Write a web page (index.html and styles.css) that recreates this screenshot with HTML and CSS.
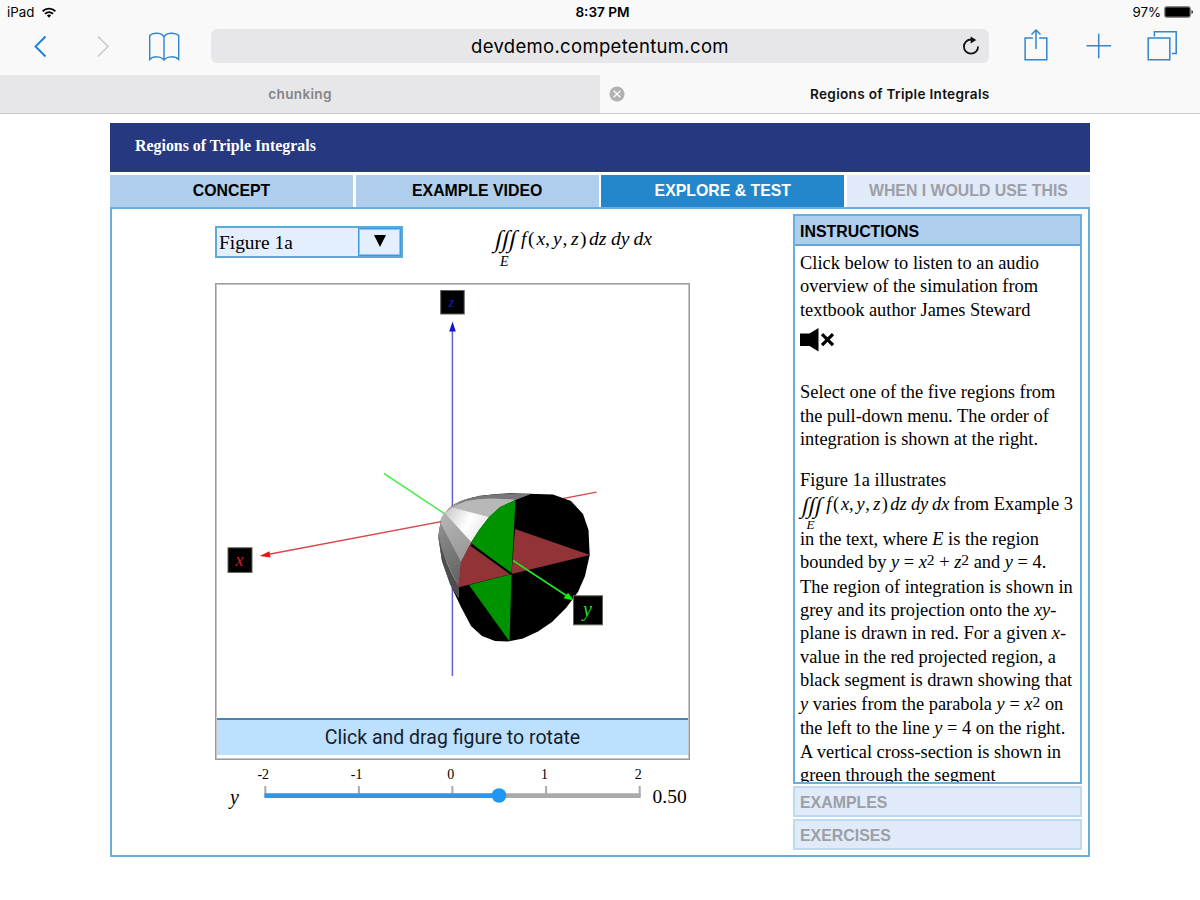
FILE: index.html
```html
<!DOCTYPE html>
<html lang="en">
<head>
<meta charset="utf-8">
<title>Regions of Triple Integrals</title>
<link rel="stylesheet" href="styles.css">
</head>
<body>
<header class="browser">
  <div class="status">
    <div class="status-left"><span class="device">iPad</span>
      <svg class="wifi" width="14" height="11" viewBox="0 0 14 11" fill="none" stroke="#000"><path d="M.6 4.2a9.3 9.3 0 0 1 12.8 0" stroke-width="1.9"/><path d="M3 6.8a5.9 5.9 0 0 1 8 0" stroke-width="1.8"/><path d="M4.9 8.5a3.2 3.2 0 0 1 4.2 0L7 10.7z" fill="#000" stroke="none"/></svg>
    </div>
    <div class="clock">8:37 PM</div>
    <div class="status-right"><span class="percent">97%</span>
      <svg width="30" height="12" viewBox="0 0 30 12"><rect x=".5" y=".5" width="26" height="11" rx="2" fill="none" stroke="#888"/><rect x="1.2" y="1.2" width="24.600" height="9.600" rx="1" fill="#000"/><path d="M27.5 4q1.5.4 1.5 2t-1.5 2z" fill="#222"/></svg>
    </div>
  </div>
  <div class="toolbar">
    <svg class="nav-icons" width="200" height="40" viewBox="0 0 200 40" fill="none"><path d="M45.5 11.500 35.500 21.500 45.500 31.500" stroke="#1d7fdc" stroke-width="1.9"/><path d="M98 11.500 108 21.500 98 31.500" stroke="#c9c9cd" stroke-width="1.6"/><path d="M164 35V12C162 7.500 153 7 149.700 10.500V34.500C153 31 161 30.700 164 35C167 30.700 175 31 178.700 34.500V10.500C175 7 166 7.500 164 12" stroke="#3185cc" stroke-width="1.4"/></svg>
    <div class="address"><span class="url">devdemo.competentum.com</span>
      <svg class="reload" width="20" height="20" viewBox="0 0 20 20" fill="none"><path d="M12.100 3.500H10A7.100 7.100 0 1 0 17.100 10.600" stroke="#111" stroke-width="1.8"/><path d="M9.700.600 15.300 4 9.700 7.400z" fill="#111"/></svg>
    </div>
    <svg class="actions" width="190" height="40" viewBox="0 0 190 40" fill="none" stroke="#3185cc" stroke-width="1.500"><path d="M30.800 13.100H23.100V34.700H44.800V13.100H37.200M34 24V5M29.500 9.500 34 5 38.500 9.500M84.500 20.700H109M96.700 8.700V33.200M146.200 13.100H167.800V34.700H146.200zM152.400 11.500V6.700H174.200V28.500H170"/></svg>
  </div>
  <div class="page-tabs">
    <div class="page-tab"><span class="tab-inactive">chunking</span></div>
    <div class="page-tab current">
      <svg class="close" width="16" height="16" viewBox="0 0 16 16"><circle cx="8" cy="8" r="7.600" fill="#b2b2b2"/><path d="M4.700 4.700 11.300 11.300M11.300 4.700 4.700 11.300" stroke="#fafafa" stroke-width="1.400"/></svg>
      <span class="tab-title">Regions of Triple Integrals</span>
    </div>
  </div>
</header>

<main class="app">
  <h1 class="title">Regions of Triple Integrals</h1>
  <nav class="tabs">
    <div class="tab">CONCEPT</div>
    <div class="tab">EXAMPLE VIDEO</div>
    <div class="tab active">EXPLORE &amp; TEST</div>
    <div class="tab disabled">WHEN I WOULD USE THIS</div>
  </nav>
  <div class="content">
    <section class="simulation">
      <div class="controls">
        <div class="select"><span class="select-value">Figure 1a</span><span class="select-button"><svg width="12" height="12" viewBox="0 0 12 12"><path d="M0 0H12L6 12z"/></svg></span></div>
        <svg class="formula" width="160" height="44" viewBox="0 0 160 44">
          <g class="integral"><text transform="translate(1 21) skewX(-12)">∫</text><text transform="translate(8 21) skewX(-12)">∫</text><text transform="translate(15 21) skewX(-12)">∫</text></g>
          <text class="bound" x="7" y="40">E</text>
          <g class="math"><text x="28" y="18.500" class="it">f</text><text x="35" y="18.500">(</text><text x="43.500" y="18.500" class="it">x</text><text x="52" y="18.500">,</text><text x="60" y="18.500" class="it">y</text><text x="69.500" y="18.500">,</text><text x="78" y="18.500" class="it">z</text><text x="87" y="18.500">)</text><text x="96" y="18.500" class="it">dz</text><text x="118" y="18.500" class="it">dy</text><text x="140.500" y="18.500" class="it">dx</text></g>
        </svg>
      </div>
      <div class="viewport">
        <svg class="scene" width="471" height="433" viewBox="217 285 471 433">
          <defs>
            <linearGradient id="face" x1="0" y1="0" x2="1" y2=".4"><stop offset="0" stop-color="#c4c4c4"/><stop offset=".6" stop-color="#fff"/><stop offset="1" stop-color="#e8e8e8"/></linearGradient>
            <linearGradient id="side" x1="0" y1="0" x2=".4" y2="1"><stop offset="0" stop-color="#b5b5b5"/><stop offset="1" stop-color="#9b9b9b"/></linearGradient>
            <linearGradient id="shade" x1="0" y1="0" x2=".3" y2="1"><stop offset="0" stop-color="#8f8f8f"/><stop offset="1" stop-color="#686868"/></linearGradient>
          </defs>
          <path d="M452.400 676V330" stroke="#6262d2" stroke-width="1.500"/>
          <path d="M452.500 321.500 449.200 331.500H455.800z" fill="#1515d0"/>
          <path d="M384 473.500 448 516" stroke="#55ed55" stroke-width="1.600"/>
          <path d="M596.500 492.200 265 555" stroke="#d9474b" stroke-width="1.300"/>
          <path d="M259.700 556 269.500 551.300 270.500 557.500z" fill="#ed1212"/>
          <path d="M441 519Q448 505 465 499.500Q483 494 511 493.200L553 494.500 571 501 583 514 588.500 530 589.700 555 585 576 578 592 566 608 552 622 538 631.500 523 638.500 508 641.500 495 641 482 636 471 626 461 607 451 586 442 561 438.300 537z" fill="#000"/>
          <path d="M438.300 537 441 519Q448 505 465 499.500Q483 494 531 493.800L515 500 500 507 489 517 479 530 471 543 461 562 458.500 586V598L450 584 442 561z" fill="#a2a2a2"/>
          <path d="M455 505Q467 497 485 495.500Q500 493.300 531 493.800L515 500Q485 496.500 468 501z" fill="#777"/>
          <path d="M451 508 466 501Q488 497 515 500L500 507 489 517z" fill="#b8b8b8"/>
          <path d="M444.500 513 452 507.500 489 517 479 530 471 542z" fill="url(#face)"/>
          <path d="M441 519 444.500 513 471 542 461 562 440.500 524z" fill="url(#side)"/>
          <path d="M440.500 523 461 562 458.500 586Q444 560 438.300 535z" fill="url(#shade)"/>
          <path d="M438.300 535Q445 565 458.500 586V598L450 584 442 561z" fill="#4d4d4d"/>
          <path d="M515.500 500 511.500 574 471 543 479 530 489 517 500 507z" fill="#009300"/>
          <path d="M470.500 543.500 511 574 458 587.500 461 562z" fill="#923338"/>
          <path d="M469 585 511.500 574 509.500 641.500z" fill="#009300"/>
          <path d="M515 529 590 555 511.500 574z" fill="#923338"/>
          <path d="M471 545 511.500 574" stroke="#000" stroke-width="2"/>
          <path d="M513 560.500 567 596" stroke="#25e825" stroke-width="1.500"/>
          <path d="M574 600.500 563.500 598.300 568 592.800z" fill="#08f508"/>
          <g stroke="#5c6355"><rect x="440.700" y="290.500" width="23.500" height="23.500"/><rect x="228" y="547.800" width="24" height="24.600"/><rect x="573.500" y="595.800" width="29" height="29"/></g>
          <text class="axis axis-z" x="448.500" y="307">z</text><text class="axis axis-x" x="235.500" y="565.500">x</text><text class="axis axis-y" x="583" y="616">y</text>
        </svg>
        <div class="rotate"><span>Click and drag figure to rotate</span></div>
      </div>
      <svg class="slider" width="480" height="50" viewBox="220 762 480 50">
        <g class="tick-label"><text x="263.300" y="779">-2</text><text x="356.700" y="779">-1</text><text x="450.700" y="779">0</text><text x="544.500" y="779">1</text><text x="638.200" y="779">2</text></g>
        <path d="M265.300 786V797M358.900 786V795M452.400 786V795M546.100 786V795M639.700 786V797" stroke="#aaa" stroke-width="2"/>
        <path d="M499 795.700H640.600" stroke="#aaa" stroke-width="4.800"/><path d="M264.500 795.700H499" stroke="#2e95ea" stroke-width="4.800"/>
        <circle cx="499" cy="795.500" r="7.300" fill="#2196f3"/>
        <text class="variable" x="230" y="803.500">y</text><text class="reading" x="652.500" y="803">0.50</text>
      </svg>
    </section>
    <aside class="sidebar">
      <div class="panel">
        <h2 class="panel-title">INSTRUCTIONS</h2>
        <div class="panel-body">
          <p>Click below to listen to an audio<br>overview of the simulation from<br>textbook author James Steward</p>
          <svg class="audio" width="36" height="26" viewBox="0 0 36 26"><path d="M0 6.500H9.500L18.500 1V24.500L9.500 19H0z"/><path d="M22 7.200 33 18.200M33 7.200 22 18.200" stroke="#000" stroke-width="3.200"/></svg>
          <p class="select-note">Select one of the five regions from<br>the pull-down menu. The order of<br>integration is shown at the right.</p>
          <p class="figure-note">Figure 1a illustrates</p>
          <div class="formula-line">
            <svg class="formula" width="150.400" height="41.400" viewBox="0 0 160 44">
              <g class="integral"><text transform="translate(1 21) skewX(-12)">∫</text><text transform="translate(8 21) skewX(-12)">∫</text><text transform="translate(15 21) skewX(-12)">∫</text></g>
              <text class="bound" x="7" y="38.500">E</text>
              <g class="math"><text x="28" y="18.500" class="it">f</text><text x="35" y="18.500">(</text><text x="43.500" y="18.500" class="it">x</text><text x="52" y="18.500">,</text><text x="60" y="18.500" class="it">y</text><text x="69.500" y="18.500">,</text><text x="78" y="18.500" class="it">z</text><text x="87" y="18.500">)</text><text x="96" y="18.500" class="it">dz</text><text x="118" y="18.500" class="it">dy</text><text x="140.500" y="18.500" class="it">dx</text></g>
            </svg><span>from Example 3</span>
          </div>
          <p>in the text, where <i>E</i> is the region<br>bounded by <i>y</i> = <i>x</i><sup>2</sup> + <i>z</i><sup>2</sup> and <i>y</i> = 4.</p>
          <p class="region-note">The region of integration is shown in<br>grey and its projection onto the <i>xy</i>-<br>plane is drawn in red. For a given <i>x</i>-<br>value in the red projected region, a<br>black segment is drawn showing that<br><i>y</i> varies from the parabola <i>y</i> = <i>x</i><sup>2</sup> on</p>
          <p class="region-note">the left to the line <i>y</i> = 4 on the right.<br>A vertical cross-section is shown in<br>green through the segment</p>
        </div>
      </div>
      <div class="collapsed">EXAMPLES</div>
      <div class="collapsed">EXERCISES</div>
    </aside>
  </div>
</main>
</body>
</html>
```
FILE: styles.css
```css
* { box-sizing: border-box; }
body { margin: 0; width: 1200px; height: 900px; overflow: hidden; background: #fff; color: #000; font-family: "Liberation Serif", serif; }
svg { display: block; flex: none; }
p, h1, h2 { margin: 0; }
.browser { height: 114px; background: #f9f9fa; border-bottom: 1px solid #c9c9cd; font-family: Inter, sans-serif; }
.status { height: 25px; display: grid; grid-template-columns: 1fr auto 1fr; align-items: center; padding: 0 6px 1px 7px; font-size: 13.3px; }
.status-left { display: flex; align-items: center; gap: 8px; }
.status-right { display: flex; align-items: center; justify-content: flex-end; gap: 3px; }
.clock { font-weight: 600; font-size: 13.6px; padding-left: 4px; }
.toolbar { height: 50px; display: flex; }
.address { width: 778px; height: 34px; margin: 4px 0 0 11px; border-radius: 6px; background: #e7e7e9; display: flex; align-items: center; padding-left: 260px; font-size: 18.500px; letter-spacing: .32px; }
.url { width: 257px; white-space: nowrap; }
.reload { margin-left: 233px; }
.actions { margin-left: 13px; }
.page-tabs { height: 38px; display: grid; grid-template-columns: 1fr 1fr; font-size: 13.6px; font-weight: 600; letter-spacing: .3px; }
.page-tab { display: flex; align-items: center; justify-content: center; background: #e7e7e9; color: #85858a; }
.page-tab.current { justify-content: flex-start; background: #f9f9fa; color: #111; padding-left: 9px; gap: 185px; }
.app { width: 980px; margin: 9px 0 0 110px; }
.title { height: 49px; padding-left: 25px; background: #26387f; color: #fff; font-size: 15.9px; line-height: 46px; }
.tabs { display: grid; grid-template-columns: repeat(4, 1fr); gap: 2.500px; margin-top: 3px; height: 32px; font: bold 15.85px/32px "Liberation Sans", sans-serif; text-align: center; }
.tab { background: #afceed; }
.tab.active { background: #2487cc; color: #fff; }
.tab.disabled { background: #e0eaf8; color: #9c9fa7; }
.content { height: 650px; border: 2px solid #6aafdc; display: flex; justify-content: space-between; }
.simulation { padding-left: 103px; }
.controls { display: flex; padding-top: 17px; height: 74px; }
.select { display: flex; width: 188px; height: 32px; border: 2px solid #5fa9d9; background: #e4effd; font-size: 19.4px; line-height: 29px; padding-left: 2px; justify-content: space-between; }
.select-button { width: 43px; height: 28px; border: 1px solid #3c9ada; outline: 1px solid #8fc4e8; outline-offset: -2px; display: flex; align-items: center; justify-content: center; padding-bottom: 2px; }
.formula { margin: 0 0 0 90px; overflow: visible; font-family: "Liberation Serif", serif; }
.math { font-size: 19.6px; }
.integral { font-size: 24px; }
.it, .bound { font-style: italic; }
.bound { font-size: 14px; }
.viewport { width: 475px; height: 477px; border: 1px solid #999a9d; box-shadow: inset 0 0 0 1px #c5c5c8; padding: 1px; }
.rotate { height: 37px; background: #bde0ff; border-top: 2px solid #4a84b0; text-align: center; font: 19.5px/35px Roboto, sans-serif; color: #15202b; }
.axis { font: italic 18px "Liberation Serif", serif; }
.axis-z { font-size: 15px; fill: #1b1bbd; }
.axis-x { fill: #d51c24; }
.axis-y { font-size: 20px; fill: #20dd20; }
.slider { margin: 2px 0 0 5px; }
.tick-label { font-size: 14px; text-anchor: middle; }
.variable { font-size: 20px; font-style: italic; }
.reading { font-size: 19.500px; }
.sidebar { width: 295px; padding: 5px 6px 0 0; display: flex; flex-direction: column; gap: 2px; }
.panel { height: 570px; border: 2px solid #6aafdc; overflow: hidden; }
.panel-title, .collapsed { font: bold 15.9px/31px "Liberation Sans", sans-serif; padding-left: 5px; }
.panel-title { height: 30px; background: #afceed; border-bottom: 2px solid #5fa9d9; }
.panel-body { padding: 6px 0 0 5px; font-size: 18.400px; line-height: 23.400px; white-space: nowrap; }
.audio { margin: 5px 0 28px; }
.figure-note { margin-top: 18px; }
.formula-line { display: flex; height: 35px; }
.formula-line .formula { margin: 0 3px 0 0; }
.region-note { margin-top: 1px; }
sup { font-size: 15.500px; line-height: 0; vertical-align: 3px; }
.collapsed { height: 31px; border: 2px solid #bcdaf0; background: #e0eaf8; color: #9c9fa7; line-height: 30px; }
```
